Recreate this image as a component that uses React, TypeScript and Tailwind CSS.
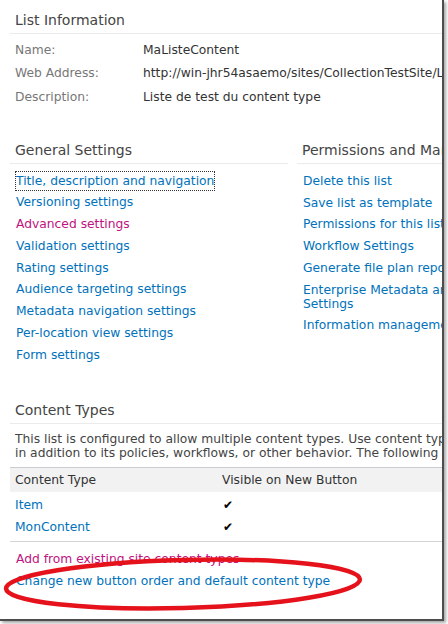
const generalLinks = [
  { label: "Title, description and navigation", focus: true },
  { label: "Versioning settings" },
  { label: "Advanced settings", visited: true },
  { label: "Validation settings" },
  { label: "Rating settings" },
  { label: "Audience targeting settings" },
  { label: "Metadata navigation settings" },
  { label: "Per-location view settings" },
  { label: "Form settings" },
];

const permissionLinks = [
  ["Delete this list"],
  ["Save list as template"],
  ["Permissions for this list"],
  ["Workflow Settings"],
  ["Generate file plan report"],
  ["Enterprise Metadata and Keywords", "Settings"],
  ["Information management policy settings"],
];

const Heading = ({ children }: { children: string }) => (
  <div className="pt-[11px] pb-[4px] px-[5px] leading-[18px] text-[14px] text-[#444] border-b border-[#ebebeb] whitespace-nowrap">
    {children}
  </div>
);

export default function App() {
  return (
    <div className="w-[448px] h-[624px] bg-white" style={{ fontFamily: "'DejaVu Sans', Verdana, sans-serif" }}>
      <div className="relative w-[444px] h-[621px] pl-[10px] border-r-2 border-b-2 border-[#4d4d4d] shadow-[2px_2px_3px_rgba(0,0,0,0.35)] overflow-hidden text-[12.3px] text-[#333]">
        {/* List Information */}
        <Heading>List Information</Heading>
        <div className="mt-[4px] px-[5px]">
          {[
            ["Name:", "MaListeContent"],
            ["Web Address:", "http://win-jhr54asaemo/sites/CollectionTestSite/Lists/MaListeContent/"],
            ["Description:", "Liste de test du content type"],
          ].map(([k, v]) => (
            <div key={k} className="flex h-[23.5px] items-center whitespace-nowrap">
              <div className="w-[128px] shrink-0 text-[#777]">{k}</div>
              <div>{v}</div>
            </div>
          ))}
        </div>

        {/* Settings columns */}
        <div className="flex mt-[21.5px] gap-[9px]">
          <div className="w-[278px] shrink-0">
            <Heading>General Settings</Heading>
            <div className="mt-[6px] pl-[6px]">
              {generalLinks.map((l) => (
                <div key={l.label} className="h-[21.75px] flex items-center whitespace-nowrap">
                  <span
                    className={
                      (l.visited ? "text-[#c0137e]" : "text-[#0072bc]") +
                      (l.focus ? " outline-1 outline-dotted outline-[#333]" : "")
                    }
                  >
                    {l.label}
                  </span>
                </div>
              ))}
            </div>
          </div>
          <div className="w-[200px] shrink-0">
            <Heading>Permissions and Management</Heading>
            <div className="mt-[6px] pl-[6px]">
              {permissionLinks.map((lines) => (
                <div key={lines[0]} className="py-[3.875px] leading-[14px] text-[#0072bc] whitespace-nowrap">
                  {lines.map((t) => (
                    <div key={t}>{t}</div>
                  ))}
                </div>
              ))}
            </div>
          </div>
        </div>

        {/* Content Types */}
        <div className="mt-[24px]">
          <Heading>Content Types</Heading>
          <div className="mt-[8px] px-[5px] leading-[14px] text-[#444] whitespace-nowrap">
            <div>This list is configured to allow multiple content types. Use content types to specify the information you want to display about an item,</div>
            <div>in addition to its policies, workflows, or other behavior. The following content types are currently available in this list:</div>
          </div>
          <div className="mt-[7px] border-t border-[#c9ccd2] bg-[#f2f2f2] h-[25px] flex items-center px-[5px] whitespace-nowrap">
            <div className="w-[207px] shrink-0">Content Type</div>
            <div>Visible on New Button</div>
          </div>
          <div className="mt-[2px] pb-[3px] border-b border-[#d4d4d4] px-[5px]">
            {["Item", "MonContent"].map((n) => (
              <div key={n} className="h-[22px] flex items-center">
                <div className="w-[207px] shrink-0 text-[#0072bc]">{n}</div>
                <div className="pl-[1px] text-[12px] text-black">✔</div>
              </div>
            ))}
          </div>
          <div className="mt-[6px] px-[6px] whitespace-nowrap">
            <div className="h-[22px] flex items-center text-[#c0137e]">Add from existing site content types</div>
            <div className="h-[22px] flex items-center text-[#0072bc]">Change new button order and default content type</div>
          </div>
        </div>

        {/* hand-drawn red ellipse */}
        <svg className="absolute left-0 top-0 pointer-events-none" width="444" height="621">
          <ellipse
            cx="183"
            cy="584"
            rx="177"
            ry="24"
            transform="rotate(-1.5 183 584)"
            fill="none"
            stroke="#e5121b"
            strokeWidth="4.5"
          />
        </svg>
      </div>
    </div>
  );
}
